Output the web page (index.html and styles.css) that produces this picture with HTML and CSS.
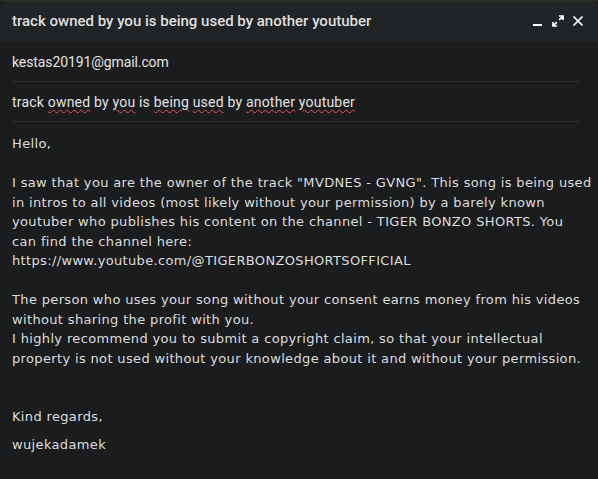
FILE: index.html
```html
<!DOCTYPE html>
<html>
<head>
<meta charset="utf-8">
<link rel="stylesheet" href="styles.css">
</head>
<body>
<div class="backdrop"></div>
<div class="window">
  <div class="titlebar">
    <div class="title">track owned by you is being used by another youtuber</div>
    <div class="controls">
      <svg class="ic" width="12" height="12" viewBox="0 0 12 12"><rect x="1" y="9" width="9" height="2" fill="#ffffff"/></svg>
      <svg class="ic" width="12" height="12" viewBox="0 0 12 12"><path d="M7 1h4v4M11 1L7.2 4.8M1 7v4h4M1 11l3.8-3.8" stroke="#ffffff" stroke-width="1.7" fill="none"/></svg>
      <svg class="ic" width="12" height="12" viewBox="0 0 12 12"><path d="M1.5 1.5l9 9M10.5 1.5l-9 9" stroke="#ffffff" stroke-width="1.7" fill="none"/></svg>
    </div>
  </div>
  <div class="fields">
    <div class="field">kestas20191@gmail.com</div>
    <div class="field subj">track <span class="sp">owned</span> by <span class="sp">you</span> is <span class="sp">being</span> <span class="sp">used</span> by <span class="sp">another</span> <span class="sp">youtuber</span></div>
  </div>
  <div class="body">
    <p>Hello,</p>
    <p>&nbsp;</p>
    <p>I saw that you are the owner of the track "MVDNES - GVNG". This song is being used in intros to all videos (most likely without your permission) by a barely known youtuber who publishes his content on the channel - TIGER BONZO SHORTS. You can find the channel here:<br>https://www.youtube.com/@TIGERBONZOSHORTSOFFICIAL</p>
    <p>&nbsp;</p>
    <p>The person who uses your song without your consent earns money from his videos without sharing the profit with you.<br>I highly recommend you to submit a copyright claim, so that your intellectual property is not used without your knowledge about it and without your permission.</p>
    <p>&nbsp;</p>
    <p>&nbsp;</p>
    <p>Kind regards,</p>
    <p class="sig">wujekadamek</p>
  </div>
</div>
</body>
</html>
```

FILE: styles.css
```css
html, body {
  margin: 0;
  padding: 0;
  background: #1b1c1e;
  width: 598px;
  height: 479px;
  overflow: hidden;
}
.backdrop {
  height: 2px;
  background: #2a2d22;
}
.window {
  background: #1b1c1e;
  border-radius: 6px 6px 0 0;
  overflow: hidden;
}
.titlebar {
  height: 40px;
  background: #212426;
  display: flex;
  align-items: center;
  justify-content: space-between;
  padding: 0 14px 0 12px;
}
.title {
  font-family: Roboto, "Open Sans", sans-serif;
  font-size: 15px;
  font-weight: 500;
  color: #dedede;
  margin-top: -2px;
}
.controls {
  display: flex;
  gap: 8px;
  align-items: center;
  margin-top: -2px;
}
.ic {
  display: block;
}
.fields {
  padding: 0 18px 0 12px;
}
.field {
  font-family: Roboto, "Open Sans", sans-serif;
  font-size: 14px;
  color: #e3e3e3;
  height: 39px;
  line-height: 40px;
  border-bottom: 1px solid #2c2e31;
  letter-spacing: -0.1px;
}
.field.subj {
  letter-spacing: 0.2px;
}
.sp {
  text-decoration: underline wavy #e05454;
  text-decoration-thickness: 1px;
  text-underline-offset: 2px;
}
.body {
  padding: 12px 6px 0 12px;
  font-family: "DejaVu Sans", Verdana, sans-serif;
  font-size: 13px;
  line-height: 19.5px;
  letter-spacing: 0.35px;
  color: #dcdcdc;
}
.body p {
  margin: 0;
}
.body .sig {
  margin-top: 8px;
}
```
